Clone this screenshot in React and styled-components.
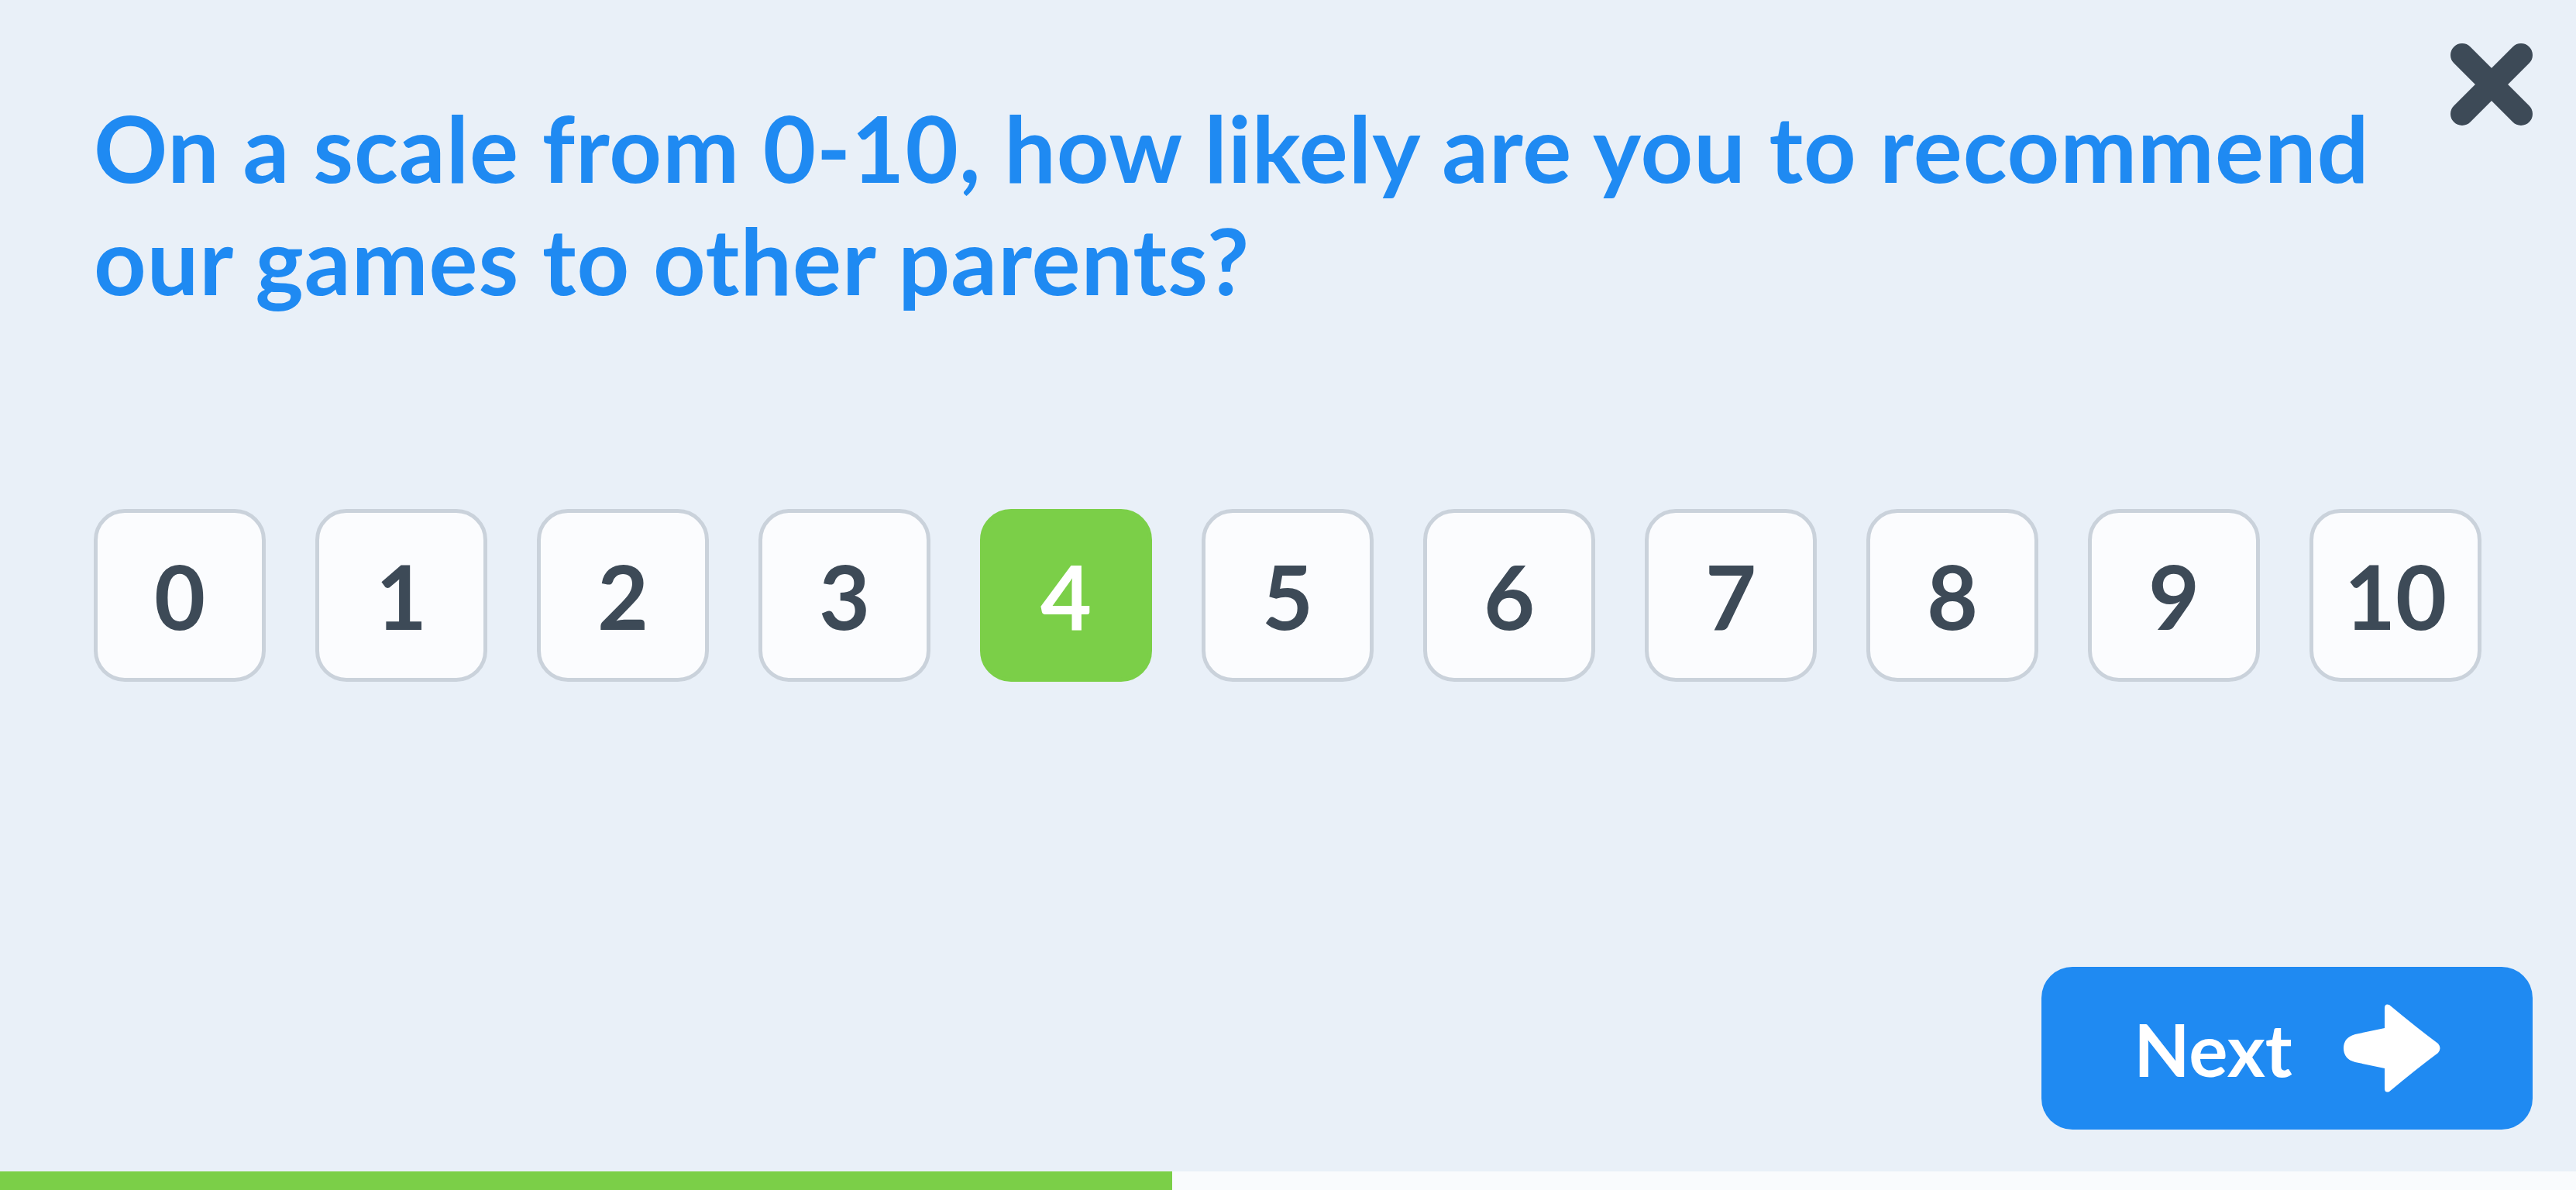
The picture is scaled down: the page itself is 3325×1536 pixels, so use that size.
import React, { useState } from 'react'
import styled, { createGlobalStyle } from 'styled-components'

const GlobalStyle = createGlobalStyle`
  html, body {
    margin: 0;
    padding: 0;
    background: #e9f0f8;
  }
  * { box-sizing: border-box; }
`;

const Page = styled.div`
  width: 100%;
  height: 1536px;
  display: flex;
  flex-direction: column;
  background: #e9f0f8;
  font-family: Lato, "Open Sans", sans-serif;
  overflow: hidden;
`;

const Header = styled.div`
  display: flex;
  justify-content: space-between;
  align-items: flex-start;
  padding: 56px 56px 0 121px;
`;

const Title = styled.h1`
  margin: 62px 0 0;
  max-width: 3000px;
  font-size: 118px;
  line-height: 145px;
  font-weight: 700;
  color: #1f8af2;
  letter-spacing: 1px;
`;

const CloseButton = styled.button`
  flex: none;
  width: 106px;
  height: 106px;
  padding: 0;
  border: none;
  background: transparent;
  cursor: pointer;
  svg { display: block; }
`;

const Scale = styled.div`
  display: flex;
  gap: 64px;
  padding: 0 0 0 121px;
  margin-top: 249px;
`;

const ScoreButton = styled.button`
  width: 222px;
  height: 223px;
  border-radius: 40px;
  border: 5px solid ${p => (p.$active ? '#7bcf48' : '#cad2db')};
  background: ${p => (p.$active ? '#7bcf48' : '#fbfcfe')};
  color: ${p => (p.$active ? '#ffffff' : '#3d4a57')};
  font-family: Lato, "Open Sans", sans-serif;
  font-weight: 700;
  font-size: 114px;
  display: flex;
  align-items: center;
  justify-content: center;
  cursor: pointer;
  padding: 0;
`;

const Footer = styled.div`
  flex: 1;
  display: flex;
  justify-content: flex-end;
  align-items: flex-end;
  padding: 0 56px 54px 0;
`;

const NextButton = styled.button`
  width: 634px;
  height: 210px;
  border: none;
  border-radius: 40px;
  background: #1f8af2;
  color: #ffffff;
  font-family: Lato, "Open Sans", sans-serif;
  font-weight: 700;
  font-size: 94px;
  display: flex;
  align-items: center;
  justify-content: center;
  gap: 66px;
  padding: 0;
  cursor: pointer;
  svg { display: block; }
`;

const Progress = styled.div`
  height: 24px;
  background: #f9fbfd;
  flex: none;
`;

const ProgressFill = styled.div`
  height: 100%;
  background: #7bcf48;
`;

function CloseIcon() {
  return (
    <svg width="106" height="106" viewBox="0 0 106 106">
      <path d="M15 15 L91 91 M91 15 L15 91" stroke="#3d4a57" strokeWidth="30" strokeLinecap="round" fill="none" />
    </svg>
  )
}

function ArrowIcon() {
  return (
    <svg width="125" height="116" viewBox="0 0 125 116">
      <path
        d="M53 6 Q53 0 59 2 Q95 32 122 52 Q127 58 122 64 Q95 84 59 114 Q53 116 53 110 L53 84 L15 76 Q0 72 0 58 Q0 44 15 40 L53 32 Z"
        fill="#ffffff"
      />
    </svg>
  )
}

export default function App() {
  const [score, setScore] = useState(4)
  const progress = 45.5

  return (
    <Page>
      <GlobalStyle />
      <Header>
        <Title>On a scale from 0-10, how likely are you to recommend our games to other parents?</Title>
        <CloseButton aria-label="Close">
          <CloseIcon />
        </CloseButton>
      </Header>
      <Scale>
        {Array.from({ length: 11 }, (_, i) => (
          <ScoreButton key={i} $active={score === i} onClick={() => setScore(i)}>
            {i}
          </ScoreButton>
        ))}
      </Scale>
      <Footer>
        <NextButton>
          <span>Next</span>
          <ArrowIcon />
        </NextButton>
      </Footer>
      <Progress>
        <ProgressFill style={{ width: `${progress}%` }} />
      </Progress>
    </Page>
  )
}
